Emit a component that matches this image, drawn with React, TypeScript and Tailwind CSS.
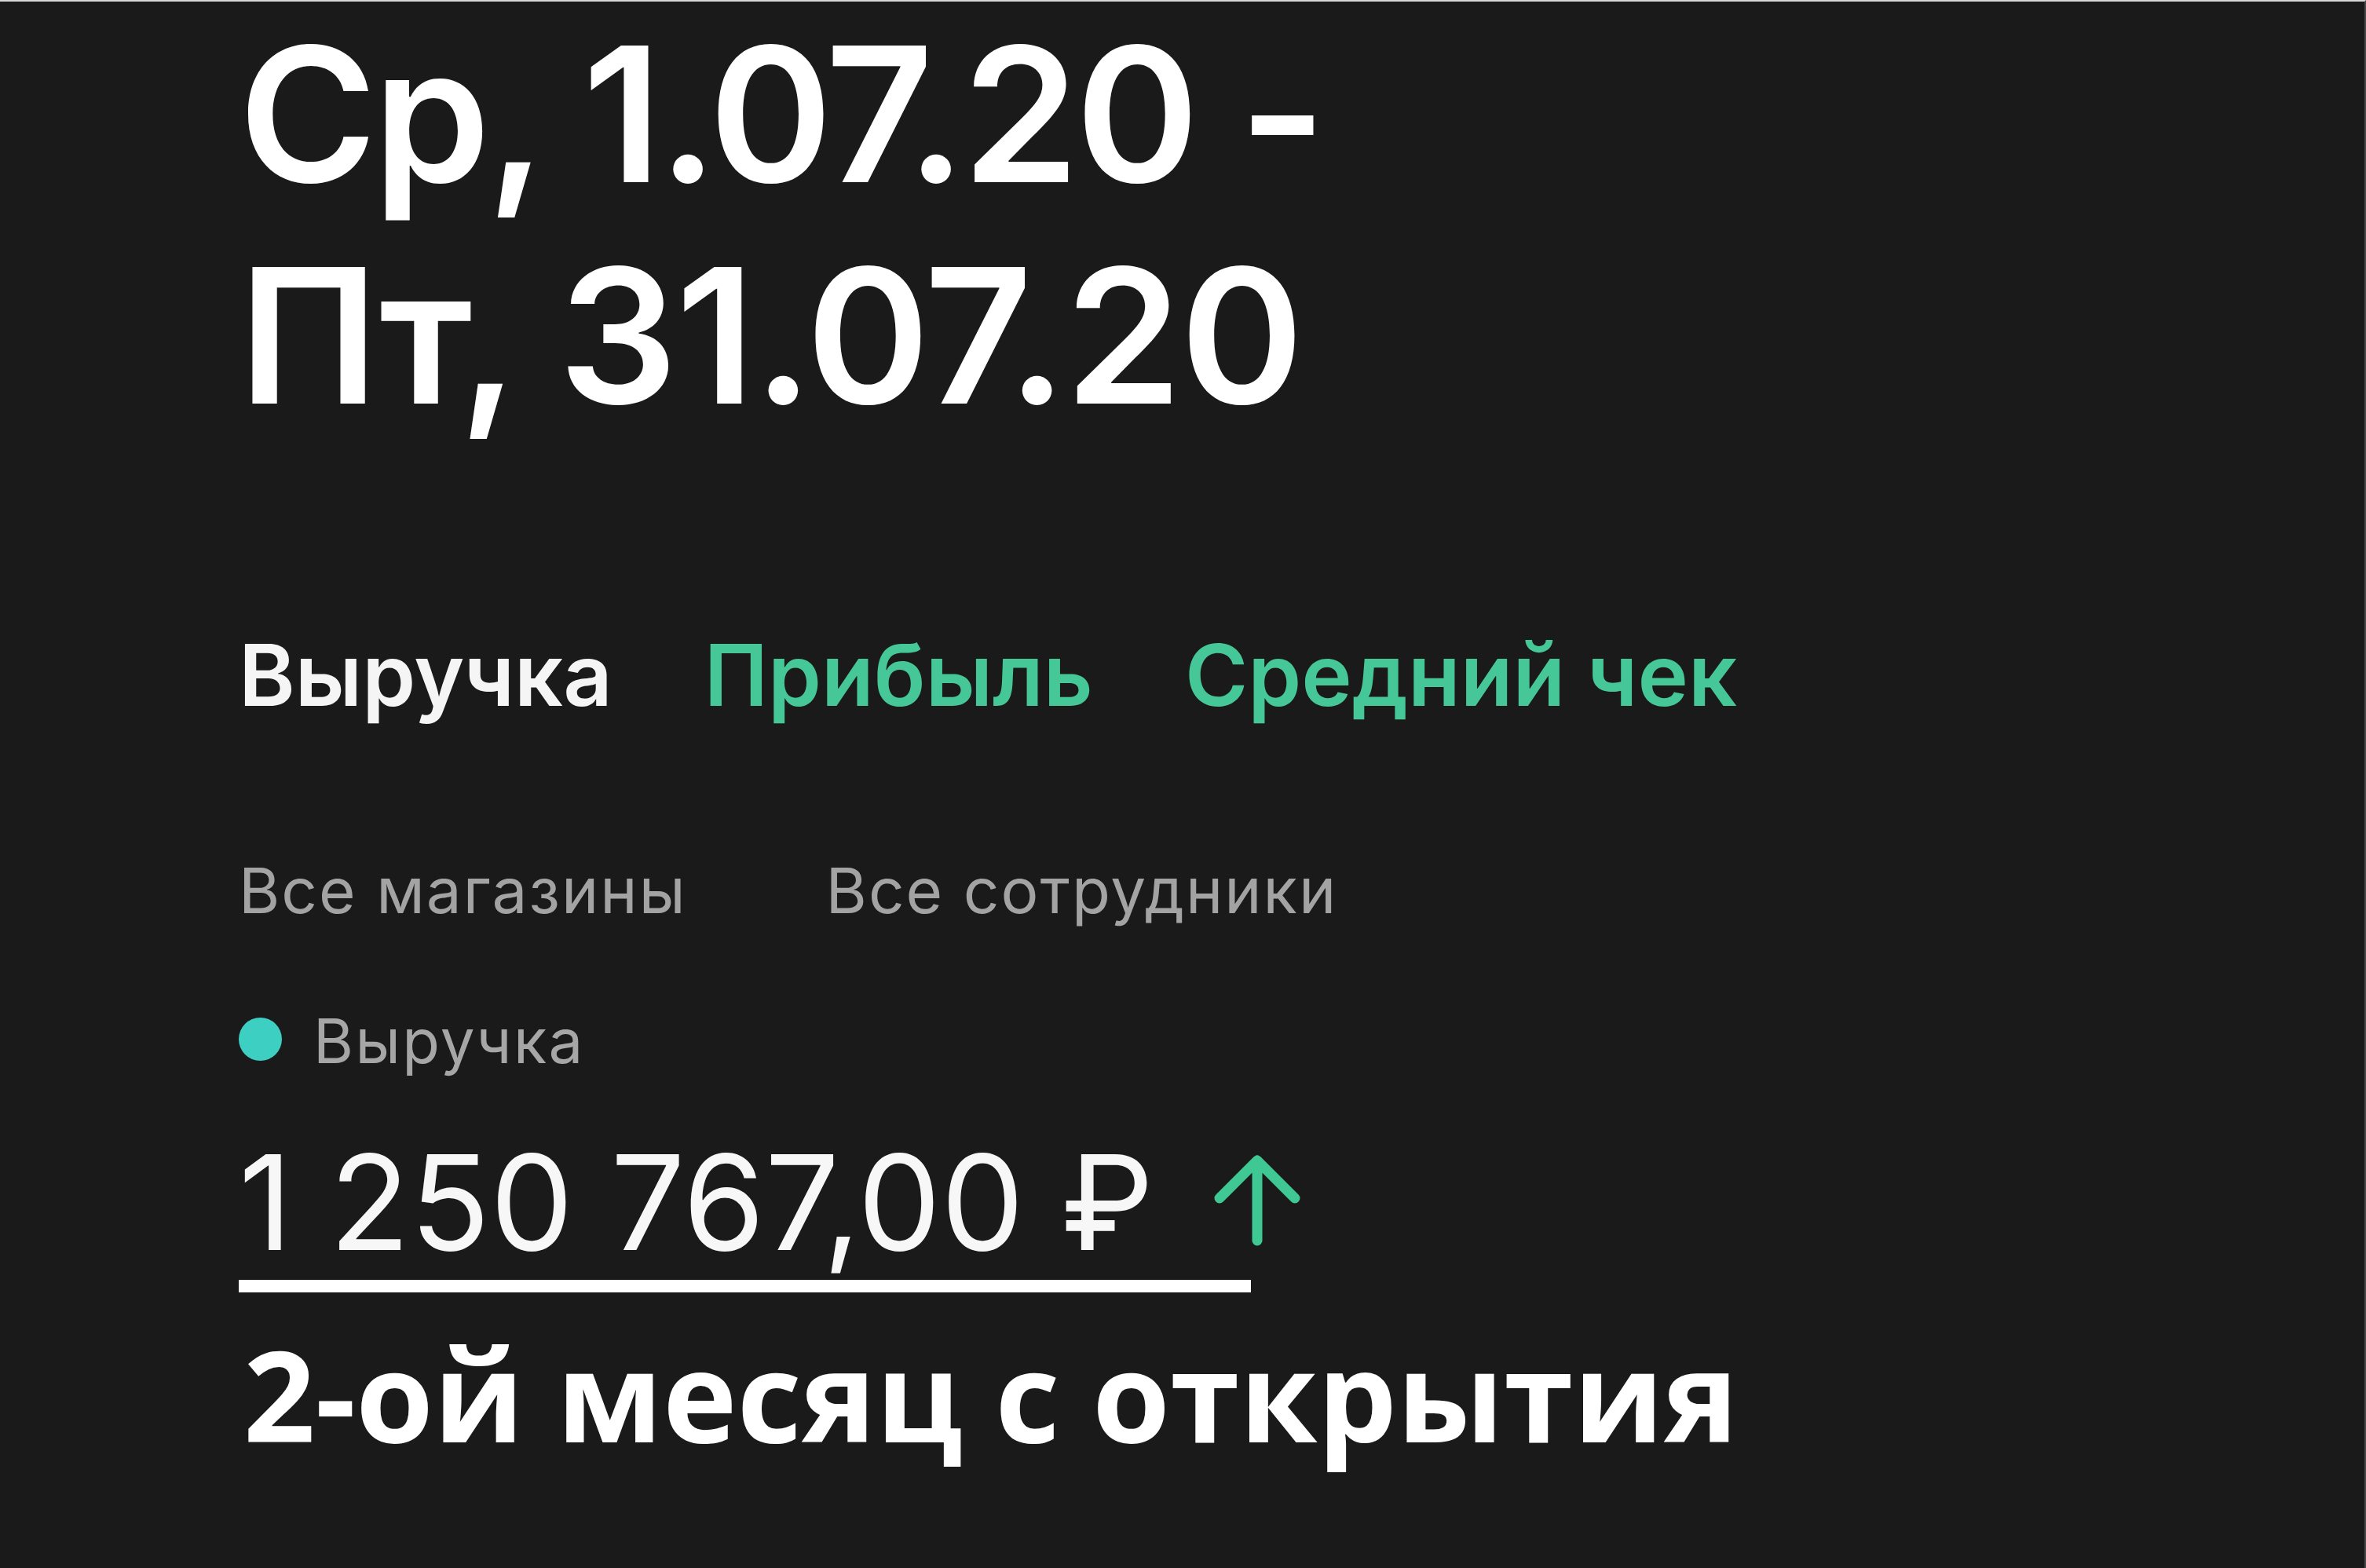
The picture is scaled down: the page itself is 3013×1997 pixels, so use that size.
import React from "react";

const tabs = [
  { label: "Выручка", active: true },
  { label: "Прибыль", active: false },
  { label: "Средний чек", active: false },
];

function ArrowUp() {
  return (
    <svg width="112" height="118" viewBox="0 0 112 118" className="mt-[38px] ml-[76px] shrink-0">
      <path
        d="M56 8 L56 110 M8 56 L56 8 L104 56"
        fill="none"
        stroke="#40c894"
        strokeWidth="13"
        strokeLinecap="round"
        strokeLinejoin="round"
      />
    </svg>
  );
}

export default function App() {
  return (
    <div className="w-[3013px] h-[1997px] bg-[#1b1a1b] border-t-2 border-t-[#d9d9d9] border-r-2 border-r-[#4a4a4a] overflow-hidden font-['Inter','Noto_Sans',sans-serif]">
      <div className="pl-[304px] flex flex-col">
        {/* период */}
        <div className="mt-[2px] text-[239px] leading-[282px] font-semibold text-white tracking-[-0.02em]">
          <div>Ср, 1.07.20 -</div>
          <div className="tracking-[-0.01em]">Пт, 31.07.20</div>
        </div>

        {/* вкладки */}
        <div className="mt-[228px] flex gap-[117px] text-[109px] leading-[127px] font-semibold">
          {tabs.map((t) => (
            <span key={t.label} className={t.active ? "text-[#f5f5f5]" : "text-[#45c797]"}>
              {t.label}
            </span>
          ))}
        </div>

        {/* фильтры */}
        <div className="mt-[165px] flex gap-[177px] text-[80px] leading-[92px] tracking-[0.025em] text-[#a3a3a3]">
          <span>Все магазины</span>
          <span>Все сотрудники</span>
        </div>

        {/* легенда */}
        <div className="mt-[102px] flex items-center gap-[40px] text-[78px] leading-[88px] tracking-[0.03em] text-[#a6a6a6]">
          <span className="w-[55px] h-[55px] rounded-full bg-[#3dcfc1] shrink-0 -mt-[5px]" />
          <span>Выручка</span>
        </div>

        {/* сумма */}
        <div className="mt-[62px] flex items-start">
          <span className="text-[168px] leading-[198px] text-[#f7f7f7]">1 250 767,00 ₽</span>
          <ArrowUp />
        </div>
        <div className="w-[1289px] h-[16px] bg-white" />

        {/* подпись */}
        <div className="mt-[49px] ml-[6px] text-[160px] leading-[160px] font-bold text-white font-['Open_Sans','Noto_Sans',sans-serif]">
          2-ой месяц с открытия
        </div>
      </div>
    </div>
  );
}
